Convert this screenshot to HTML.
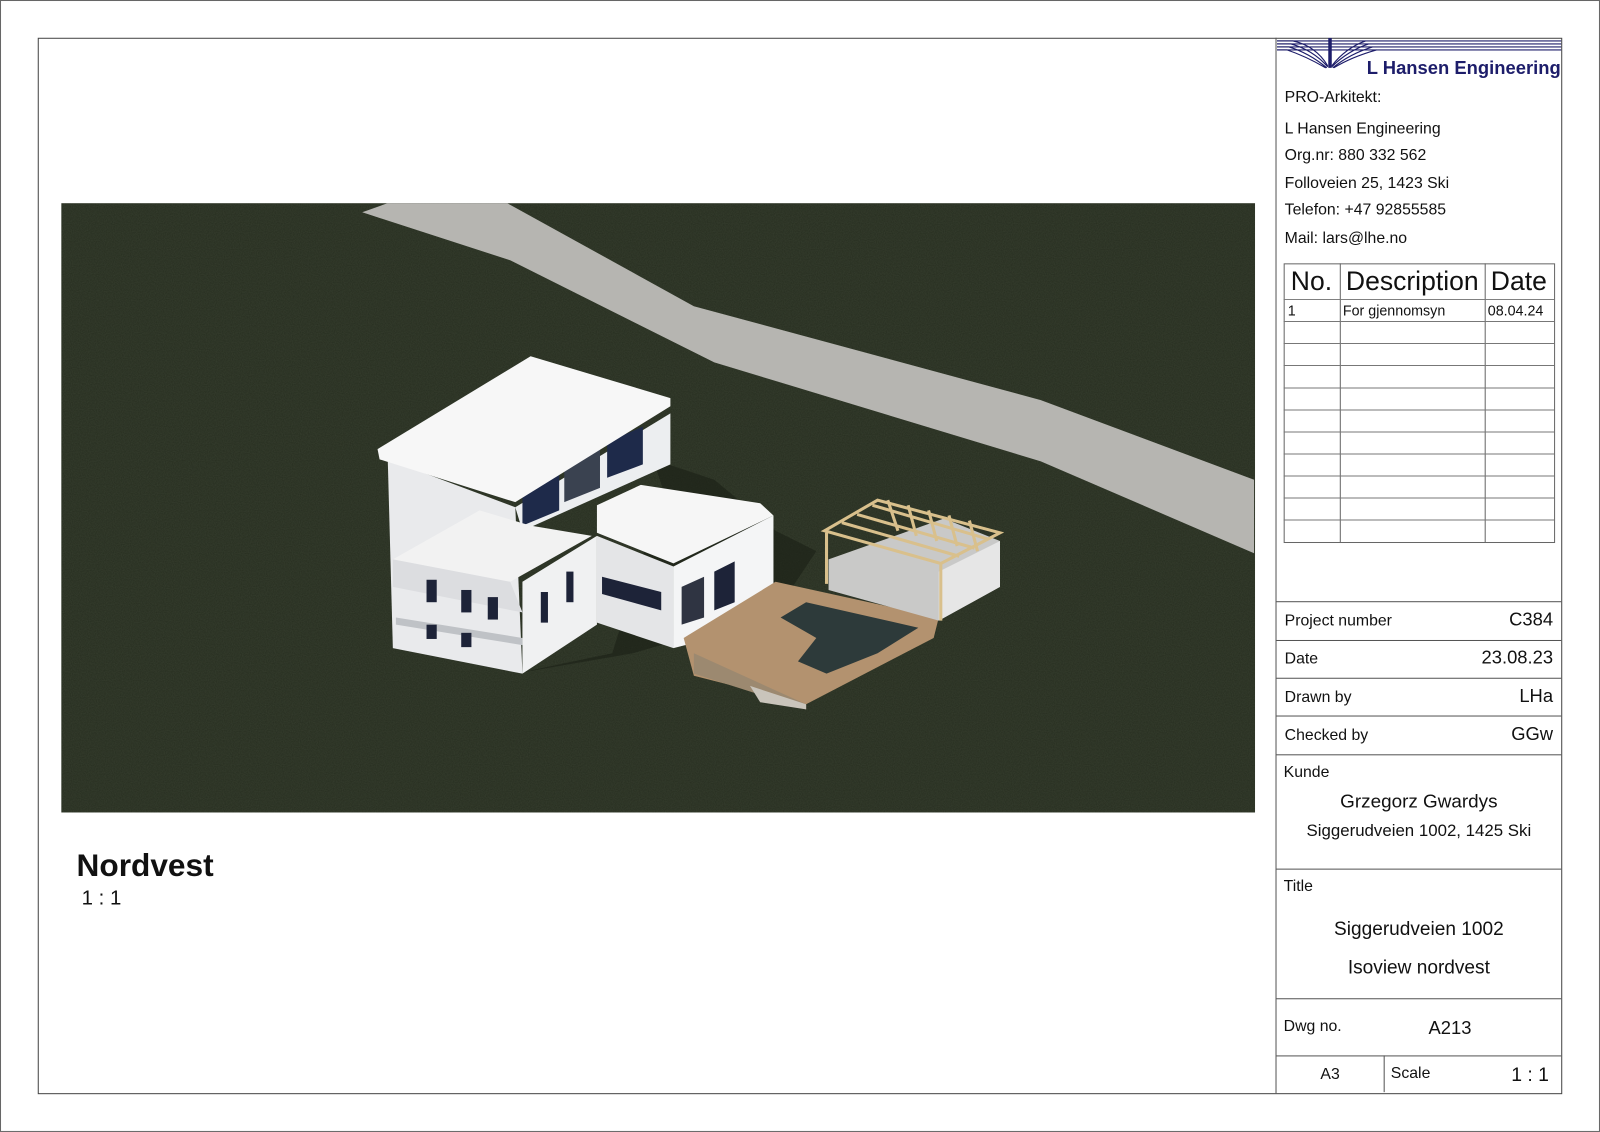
<!DOCTYPE html>
<html><head><meta charset="utf-8">
<style>
html,body{margin:0;padding:0;background:#fff;}
body{width:1600px;height:1132px;overflow:hidden;position:relative;font-family:"Liberation Sans",Arial,sans-serif;color:#111;}
#w{position:absolute;left:0;top:0;width:1568px;height:1109px;transform:scale(1.0204,1.0207);transform-origin:0 0;}
.a{position:absolute;}
.t{position:absolute;font-size:15.5px;white-space:nowrap;}
.hl{position:absolute;left:1251px;width:279px;height:0;border-top:1.4px solid #555;}
</style></head><body>
<div id="w">
<div class="a" style="left:0;top:0;width:1566px;height:1107px;border:1px solid #666;"></div>
<div class="a" style="left:37px;top:37px;width:1492px;height:1033px;border:1.6px solid #444;"></div>
<div class="a" style="left:1250px;top:37px;height:1034px;border-left:1.4px solid #555;"></div>

<svg class="a" style="left:60px;top:199px" width="1170" height="597" viewBox="60 199 1170 597">
<defs><filter id="n" x="0" y="0" width="100%" height="100%"><feTurbulence type="fractalNoise" baseFrequency="0.9" numOctaves="2" seed="3"/><feColorMatrix values="0 0 0 0 0.22  0 0 0 0 0.26  0 0 0 0 0.18  0 0 0 0.18 0"/></filter></defs>
<rect x="60" y="199" width="1170" height="597" fill="#262d1f"/>
<rect x="60" y="199" width="1170" height="597" filter="url(#n)"/>
<polygon points="355,208,380,199,497,199,680,300,1020,392,1229,470,1229,542,1020,452,700,355,500,255" fill="#b6b5b1"/>
<polygon points="505,660,620,640,760,600,800,540,760,520,700,470,640,450,650,480,600,640" fill="#1a2015" opacity="0.6"/>
<polygon points="380,450,505,497,512,660,385,635" fill="#e9eaec"/>
<polygon points="505,497,657,405,657,455,512,520" fill="#eceef0"/>
<polygon points="512,470,548,455,548,500,512,515" fill="#1e2a4a"/>
<polygon points="553,452,588,438,588,478,553,492" fill="#3a4250"/>
<polygon points="595,433,630,418,630,455,595,468" fill="#1e2a4a"/>
<polygon points="370,440,520,349,657,390,657,398,505,492,372,450" fill="#f7f7f7"/>
<polygon points="385,548,470,500,520,515,580,525,500,570" fill="#f2f2f2"/>
<polygon points="385,548,500,570,512,600,385,575" fill="#dcdde0"/>
<polygon points="388,605,512,625,512,632,388,612" fill="#bfc2c6"/>
<rect x="418" y="568" width="10" height="22" fill="#1d2338"/><rect x="452" y="578" width="10" height="22" fill="#1d2338"/><rect x="478" y="585" width="10" height="22" fill="#1d2338"/>
<rect x="418" y="612" width="10" height="14" fill="#1d2338"/><rect x="452" y="620" width="10" height="14" fill="#1d2338"/>
<polygon points="512,570,585,525,585,612,512,660" fill="#f0f1f2"/>
<rect x="530" y="580" width="7" height="30" fill="#1d2338"/><rect x="555" y="560" width="7" height="30" fill="#1d2338"/>
<polygon points="585,525,660,555,660,635,585,610" fill="#e4e5e7"/>
<polygon points="590,565,648,580,648,598,590,582" fill="#1d2338"/>
<polygon points="660,555,758,505,758,610,660,635" fill="#f4f5f6"/>
<polygon points="668,575,690,565,690,605,668,612" fill="#2f3442"/><polygon points="700,560,720,550,720,590,700,598" fill="#1d2338"/>
<polygon points="585,495,628,475,745,493,758,505,660,552,585,522" fill="#f6f6f6"/>
<polygon points="670,625,760,570,920,605,915,625,790,690,680,662" fill="#b3926f"/>
<polygon points="680,640,790,690,790,695,680,660" fill="#9c8970"/>
<polygon points="735,672,790,690,790,695,745,688" fill="#c9c4bb"/>
<polygon points="765,605,790,590,900,615,860,640,810,660,782,648,800,625" fill="#2d3a3a"/>
<polygon points="812,548,925,508,980,530,980,575,920,608,812,578" fill="#c9c9c8"/>
<polygon points="920,560,980,530,980,575,920,608" fill="#e6e6e6"/>
<g stroke="#d9c08c" stroke-width="3" fill="none">
<path d="M808,520 L860,490 L980,522 L922,552 Z M810,522 L810,572 M922,552 L922,608"/>
<path d="M825,512 L940,545 M840,504 L955,537 M855,495 L968,528 M870,490 L880,520 M890,495 L898,525 M910,500 L918,530 M930,505 L938,535 M950,510 L958,540"/>
</g>
</svg>

<div class="a" style="left:75px;top:830px;font-size:31px;font-weight:bold;">Nordvest</div>
<div class="a" style="left:80px;top:869px;font-size:20px;">1 : 1</div>

<svg class="a" style="left:1251px;top:37px" width="279" height="40" viewBox="1276 37.8 285 41">
<g stroke="#1d1d6a" stroke-width="1.1" fill="none">
<path d="M1276,41 H1562 M1276,44 H1562 M1276,47 H1562 M1276,50 H1562"/>
<path d="M1276,41 H1292 Q1315,46 1327,66 M1276,44 H1290 Q1312,50 1327,67 M1276,47 H1288 Q1308,53 1326,68 M1276,50 H1286 Q1304,56 1325,68"/>
<path d="M1331,66 Q1345,48 1365,41 M1331,67 Q1347,51 1368,44 M1332,68 Q1349,54 1372,47 M1333,68 Q1351,57 1376,50"/>
</g>
<rect x="1327.5" y="38" width="3.5" height="30" fill="#1d1d6a"/>
<text x="1561" y="74" text-anchor="end" font-family="Liberation Sans" font-weight="bold" font-size="18.5" fill="#1d1d6a">L Hansen Engineering</text>
</svg>

<div class="t" style="left:1259px;top:87px;">PRO-Arkitekt:</div>
<div class="t" style="left:1259px;top:118px;">L Hansen Engineering</div>
<div class="t" style="left:1259px;top:144px;">Org.nr: 880 332 562</div>
<div class="t" style="left:1259px;top:171px;">Folloveien 25, 1423 Ski</div>
<div class="t" style="left:1259px;top:197px;">Telefon: +47 92855585</div>
<div class="t" style="left:1259px;top:225px;">Mail: lars@lhe.no</div>

<div class="a" style="left:1258px;top:258px;width:264px;height:272px;border:1px solid #666;"></div>
<div class="a" style="left:1313px;top:258px;height:273px;border-left:1px solid #666;"></div>
<div class="a" style="left:1455px;top:258px;height:273px;border-left:1px solid #666;"></div>
<div class="a" style="left:1258px;top:293px;width:265px;height:217px;background:repeating-linear-gradient(to bottom,#777 0,#777 1px,transparent 1px,transparent 21.6px);"></div>
<div class="t" style="left:1265px;top:260px;font-size:26px;">No.</div>
<div class="t" style="left:1319px;top:260px;font-size:26px;">Description</div>
<div class="t" style="left:1461px;top:260px;font-size:26px;">Date</div>
<div class="t" style="left:1262px;top:296px;font-size:14px;">1</div>
<div class="t" style="left:1316px;top:296px;font-size:14px;">For gjennomsyn</div>
<div class="t" style="left:1458px;top:296px;font-size:14px;">08.04.24</div>

<div class="hl" style="top:589px"></div>
<div class="hl" style="top:627px"></div>
<div class="hl" style="top:664px"></div>
<div class="hl" style="top:701px"></div>
<div class="hl" style="top:739px"></div>
<div class="hl" style="top:851px"></div>
<div class="hl" style="top:978px"></div>
<div class="hl" style="top:1034px"></div>
<div class="a" style="left:1356px;top:1034px;height:36px;border-left:1.4px solid #555;"></div>

<div class="t" style="left:1259px;top:600px;">Project number</div><div class="t" style="right:46px;top:597px;font-size:18px;">C384</div>
<div class="t" style="left:1259px;top:637px;">Date</div><div class="t" style="right:46px;top:634px;font-size:18px;">23.08.23</div>
<div class="t" style="left:1259px;top:675px;">Drawn by</div><div class="t" style="right:46px;top:672px;font-size:18px;">LHa</div>
<div class="t" style="left:1259px;top:712px;">Checked by</div><div class="t" style="right:46px;top:709px;font-size:18px;">GGw</div>
<div class="t" style="left:1258px;top:748px;">Kunde</div>
<div class="t" style="left:1251px;width:279px;text-align:center;top:774px;font-size:18.5px;">Grzegorz Gwardys</div>
<div class="t" style="left:1251px;width:279px;text-align:center;top:805px;font-size:16.5px;">Siggerudveien 1002, 1425 Ski</div>
<div class="t" style="left:1258px;top:860px;">Title</div>
<div class="t" style="left:1251px;width:279px;text-align:center;top:899px;font-size:18.7px;">Siggerudveien 1002</div>
<div class="t" style="left:1251px;width:279px;text-align:center;top:937px;font-size:18.7px;">Isoview nordvest</div>
<div class="t" style="left:1258px;top:997px;">Dwg no.</div>
<div class="t" style="left:1400px;top:997px;font-size:18px;">A213</div>
<div class="t" style="left:1294px;top:1044px;">A3</div>
<div class="t" style="left:1363px;top:1043px;">Scale</div>
<div class="t" style="right:50px;top:1043px;font-size:19px;">1 : 1</div>
</div>
</body></html>
